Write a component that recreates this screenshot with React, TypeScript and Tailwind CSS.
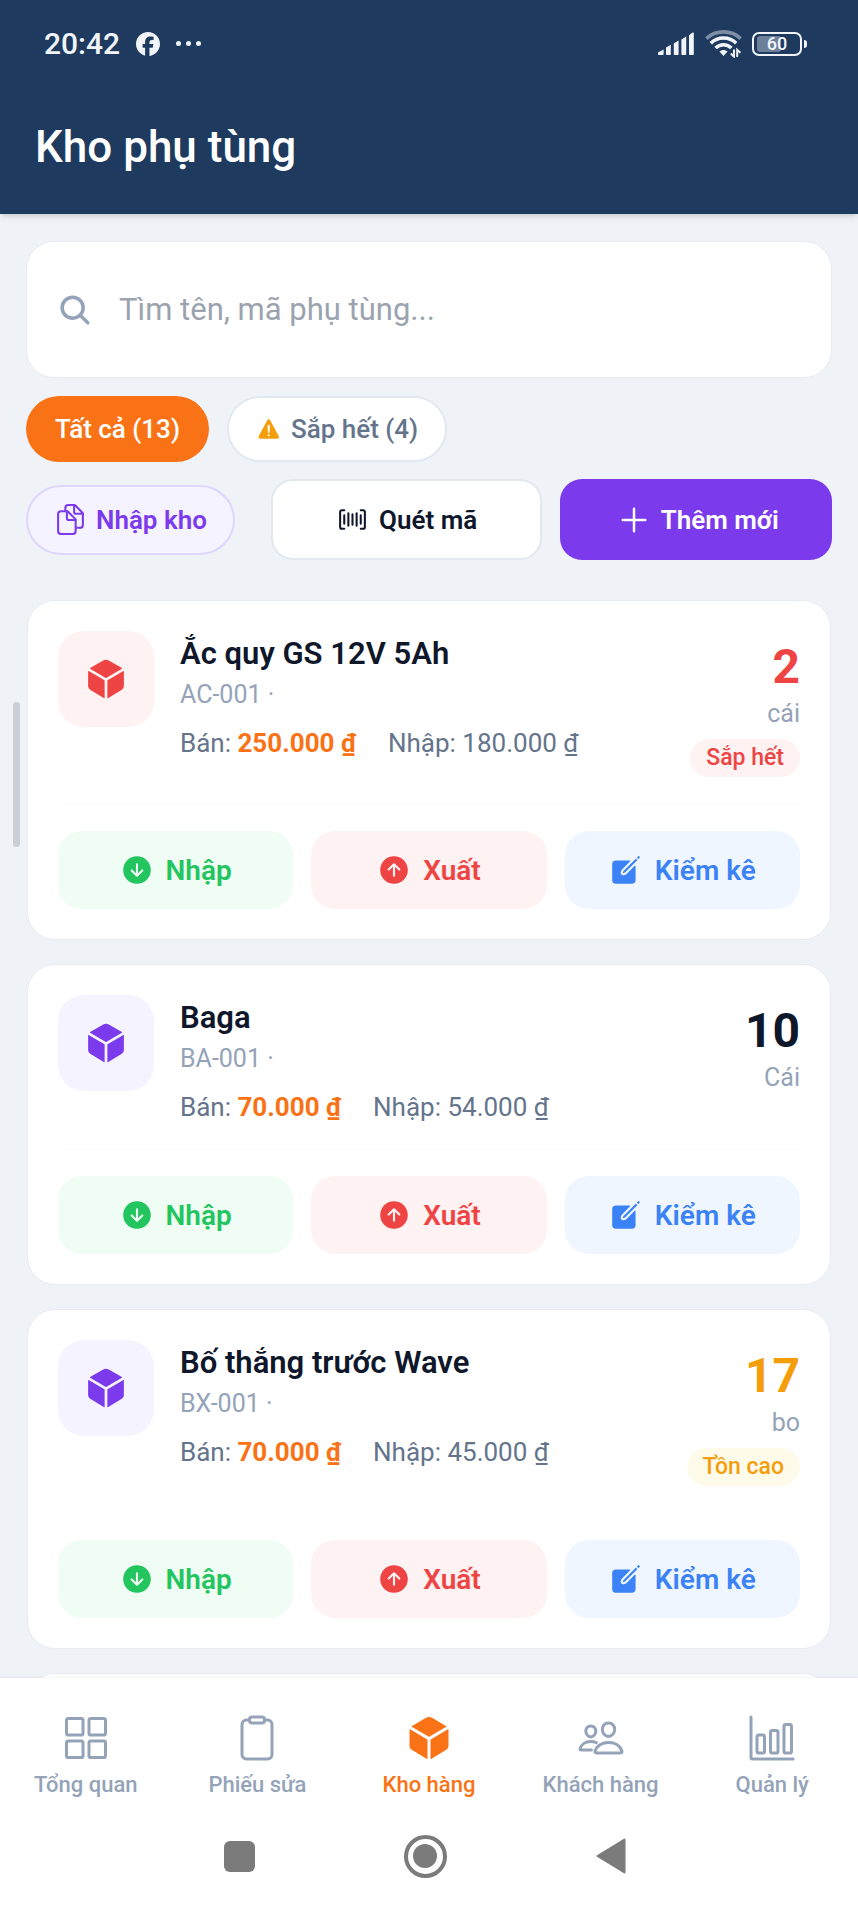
import type { ReactNode } from "react";
import type { IconType } from "react-icons";
import {
  IoAdd,
  IoArrowDownCircle,
  IoArrowUpCircle,
  IoBarChartOutline,
  IoBarcodeOutline,
  IoClipboardOutline,
  IoCreate,
  IoCube,
  IoDocumentsOutline,
  IoGridOutline,
  IoPeopleOutline,
  IoSearch,
  IoWarning,
} from "react-icons/io5";
import { FaFacebook } from "react-icons/fa6";

type Product = {
  name: string;
  code: string;
  sell: string;
  buy: string;
  count: number;
  unit: string;
  tile: string;
  countColor: string;
  badge?: { text: string; className: string };
};

const products: Product[] = [
  {
    name: "Ắc quy GS 12V 5Ah",
    code: "AC-001",
    sell: "250.000 ₫",
    buy: "180.000 ₫",
    count: 2,
    unit: "cái",
    tile: "bg-[#fef2f2] text-[#ef4444]",
    countColor: "text-[#ef4444]",
    badge: { text: "Sắp hết", className: "bg-[#fef2f2] text-[#ef4444]" },
  },
  {
    name: "Baga",
    code: "BA-001",
    sell: "70.000 ₫",
    buy: "54.000 ₫",
    count: 10,
    unit: "Cái",
    tile: "bg-[#f5f3ff] text-[#7c3aed]",
    countColor: "text-[#0f172a]",
  },
  {
    name: "Bố thắng trước Wave",
    code: "BX-001",
    sell: "70.000 ₫",
    buy: "45.000 ₫",
    count: 17,
    unit: "bo",
    tile: "bg-[#f5f3ff] text-[#7c3aed]",
    countColor: "text-[#f59e0b]",
    badge: { text: "Tồn cao", className: "bg-[#fffbeb] text-[#f59e0b]" },
  },
];

const tabs: { label: string; icon: IconType; active?: boolean }[] = [
  { label: "Tổng quan", icon: IoGridOutline },
  { label: "Phiếu sửa", icon: IoClipboardOutline },
  { label: "Kho hàng", icon: IoCube, active: true },
  { label: "Khách hàng", icon: IoPeopleOutline },
  { label: "Quản lý", icon: IoBarChartOutline },
];

function SignalIcon() {
  return (
    <svg width="37" height="24" viewBox="0 0 37 24" fill="currentColor" aria-hidden="true">
      <path d="M0 22.2V20.6L5.6 17.4V22.2Q5.6 23 4.8 23H.8Q0 23 0 22.2Z" />
      <path d="M8 15.6L12.8 12.8V22.2Q12.8 23 12 23H8.8Q8 23 8 22.2Z" />
      <path d="M15.8 11.4L20.6 8.6V22.2Q20.6 23 19.8 23H16.6Q15.8 23 15.8 22.2Z" />
      <path d="M23.4 7.4L28.2 4.6V22.2Q28.2 23 27.4 23H24.2Q23.4 23 23.4 22.2Z" />
      <path d="M31 3.2L34.6 .6Q35.8 .2 35.8 1.2V22.2Q35.8 23 35 23H31.8Q31 23 31 22.2Z" />
    </svg>
  );
}

function WifiIcon() {
  return (
    <svg width="37" height="29" viewBox="0 0 37 29" fill="none" stroke="currentColor" strokeWidth="3.6" aria-hidden="true">
      <path d="M1.4 9.6C10.5 .6 26.5 .6 35.6 9.6" opacity=".45" />
      <path d="M5.8 14.2C12.8 7.3 24.2 7.3 31.2 14.2" />
      <path d="M10.6 19C15 14.6 22 14.6 26.4 19" />
      <path d="M14.4 22.6C16.8 20.3 20.2 20.3 22.6 22.6L18.5 27Z" fill="currentColor" stroke="none" />
      <path d="M29 20.4V27.6L25.8 24.6M32.2 28V20.8L35.4 23.8" strokeWidth="2" />
    </svg>
  );
}

function Battery() {
  return (
    <div className="flex items-center gap-[2px]">
      <div className="relative flex h-6 w-[50px] items-center justify-center rounded-[7px] border-2 border-[#f1f5f9]">
        <span className="absolute inset-y-[2px] left-[3px] w-6 rounded-[3px] bg-[#6d809b]" />
        <span className="relative text-lg font-medium leading-5">60</span>
      </div>
      <span className="h-2 w-[3px] rounded-r-sm bg-[#f1f5f9]" />
    </div>
  );
}

function ActionButton({ icon: Icon, className, children }: { icon: IconType; className: string; children: ReactNode }) {
  return (
    <button type="button" className={`flex h-[78px] items-center justify-center gap-3 rounded-3xl text-[28px] font-semibold ${className}`}>
      <Icon className="size-[34px]" aria-hidden="true" />
      <span className="pt-[2px]">{children}</span>
    </button>
  );
}

function ProductCard({ product }: { product: Product }) {
  return (
    <article className="rounded-[28px] border border-[#e7ecf2] bg-white p-[30px]">
      <div className="flex items-start pb-[27px]">
        <div className={`flex size-24 shrink-0 items-center justify-center rounded-[26px] ${product.tile}`}>
          <IoCube className="size-[44px]" aria-hidden="true" />
        </div>
        <div className="ml-[26px] min-w-0 flex-1">
          <h2 className="truncate text-[31px] font-semibold leading-[46px] text-[#0f172a]">{product.name}</h2>
          <p className="text-[25px] leading-9 text-[#94a3b8]">{product.code} ·</p>
          <p className="mt-[15px] flex gap-8 whitespace-nowrap text-[26px] leading-[30px] text-[#64748b]">
            <span>
              Bán: <b className="font-bold text-[#f97316]">{product.sell}</b>
            </span>
            <span>Nhập: {product.buy}</span>
          </p>
        </div>
        <div className="flex flex-col items-end pt-2">
          <span className={`text-5xl font-bold leading-[56px] ${product.countColor}`}>{product.count}</span>
          <span className="text-[25px] leading-[38px] text-[#94a3b8]">{product.unit}</span>
          {product.badge && (
            <span className={`mt-[6px] rounded-full px-4 text-[23px] font-medium leading-[38px] ${product.badge.className}`}>
              {product.badge.text}
            </span>
          )}
        </div>
      </div>
      <div className="grid grid-cols-3 gap-[18px] border-t border-[#f8fafc] pt-[26px]">
        <ActionButton icon={IoArrowDownCircle} className="bg-[#f0fdf4] text-[#22c55e]">
          Nhập
        </ActionButton>
        <ActionButton icon={IoArrowUpCircle} className="bg-[#fef2f2] text-[#ef4444]">
          Xuất
        </ActionButton>
        <ActionButton icon={IoCreate} className="bg-[#eff6ff] text-[#3b82f6]">
          Kiểm kê
        </ActionButton>
      </div>
    </article>
  );
}

export default function App() {
  return (
    <div className="relative flex h-screen flex-col overflow-hidden bg-[#eff3f8] font-[Roboto,'Noto_Sans',sans-serif]">
      <header className="z-10 shrink-0 bg-[#1e3a5f] text-white shadow-md">
        <div className="flex h-[87px] items-center justify-between pl-11 pr-[51px] text-[#f1f5f9]">
          <div className="flex items-center">
            <span className="text-[30px] font-medium leading-9">20:42</span>
            <FaFacebook className="ml-4 size-6" aria-hidden="true" />
            <span className="ml-4 flex gap-[5px]">
              <i className="size-[5px] rounded-full bg-current" />
              <i className="size-[5px] rounded-full bg-current" />
              <i className="size-[5px] rounded-full bg-current" />
            </span>
          </div>
          <div className="flex items-center gap-[10px]">
            <SignalIcon />
            <WifiIcon />
            <Battery />
          </div>
        </div>
        <h1 className="px-[35px] pb-[37px] pt-[30px] text-[44px] font-medium leading-[60px]">Kho phụ tùng</h1>
      </header>

      <main className="min-h-0 flex-1 overflow-y-auto px-[26px] pt-[27px] [scrollbar-width:none]">
        <label className="flex h-[137px] items-center gap-[26px] rounded-[28px] border border-[#e7ecf2] bg-white px-[30px]">
          <IoSearch className="size-9 shrink-0 text-[#94a3b8]" aria-hidden="true" />
          <input
            type="search"
            aria-label="Tìm phụ tùng"
            placeholder="Tìm tên, mã phụ tùng..."
            className="min-w-0 flex-1 bg-transparent text-[31px] leading-10 text-[#0f172a] outline-none placeholder:text-[#9ca3af]"
          />
        </label>

        <div className="mt-[18px] flex gap-[18px] text-[26px] font-medium">
          <button type="button" className="h-[66px] rounded-full bg-[#f97316] px-[29px] text-white">
            Tất cả (13)
          </button>
          <button
            type="button"
            className="flex h-[66px] items-center gap-[9px] rounded-full border-2 border-[#e2e8f0] bg-white px-[27px] text-[#64748b]"
          >
            <IoWarning className="size-[26px] text-[#f59e0b]" aria-hidden="true" />
            Sắp hết (4)
          </button>
        </div>

        <div className="mt-[17px] flex items-center text-[26px] font-semibold">
          <button
            type="button"
            className="flex h-[70px] items-center gap-[9px] rounded-full border-2 border-[#ddd6fe] bg-[#f5f3ff] px-[26px] text-[#7c3aed]"
          >
            <IoDocumentsOutline className="size-[33px]" aria-hidden="true" />
            <span className="pt-[2px]">Nhập kho</span>
          </button>
          <div className="ml-9 grid flex-1 grid-cols-2 gap-[18px]">
            <button
              type="button"
              className="flex h-[81px] items-center justify-center gap-[10px] rounded-[22px] border-2 border-[#e2e8f0] bg-white text-[#0f172a]"
            >
              <IoBarcodeOutline className="size-[33px]" aria-hidden="true" />
              <span className="pt-[2px]">Quét mã</span>
            </button>
            <button
              type="button"
              className="flex h-[81px] items-center justify-center gap-[7px] rounded-[22px] bg-[#7c3aed] text-white"
            >
              <IoAdd className="size-10" aria-hidden="true" />
              <span className="pt-[2px]">Thêm mới</span>
            </button>
          </div>
        </div>

        <div className="mt-10 flex flex-col gap-6 px-px">
          {products.map((product) => (
            <ProductCard key={product.code} product={product} />
          ))}
          <div className="h-16 rounded-t-[28px] border border-[#e7ecf2] bg-white" aria-hidden="true" />
        </div>
      </main>

      <div className="absolute left-[13px] top-[702px] h-[145px] w-[7px] rounded-full bg-[#cbcfd5]" aria-hidden="true" />

      <footer className="z-10 shrink-0 bg-white shadow-[0_-1px_2px_rgba(15,23,42,0.05)]">
        <nav className="grid grid-cols-5 pt-9" aria-label="Điều hướng chính">
          {tabs.map(({ label, icon: Icon, active }) => (
            <a
              key={label}
              href="#"
              aria-current={active ? "page" : undefined}
              className={`flex flex-col items-center gap-[6px] text-[22px] font-medium leading-[34px] ${active ? "text-[#f97316]" : "text-[#94a3b8]"}`}
            >
              <Icon className="size-12" aria-hidden="true" />
              {label}
            </a>
          ))}
        </nav>
        <div className="flex h-[106px] items-center justify-center gap-[138px] pr-2 pt-[2px] text-[#7b7b7b]">
          <button type="button" aria-label="Ứng dụng gần đây" className="flex w-12 justify-center">
            <span className="size-[31px] rounded-md bg-current" />
          </button>
          <button type="button" aria-label="Màn hình chính" className="flex w-12 justify-center">
            <span className="flex size-[43px] items-center justify-center rounded-full border-4 border-current">
              <span className="size-6 rounded-full bg-current" />
            </span>
          </button>
          <button type="button" aria-label="Quay lại" className="flex w-12 justify-center">
            <svg width="30" height="36" viewBox="0 0 30 36" fill="currentColor" stroke="currentColor" strokeWidth="2" strokeLinejoin="round" aria-hidden="true">
              <path d="M1.5 18L28.5 1.5V34.5Z" />
            </svg>
          </button>
        </div>
      </footer>
    </div>
  );
}
